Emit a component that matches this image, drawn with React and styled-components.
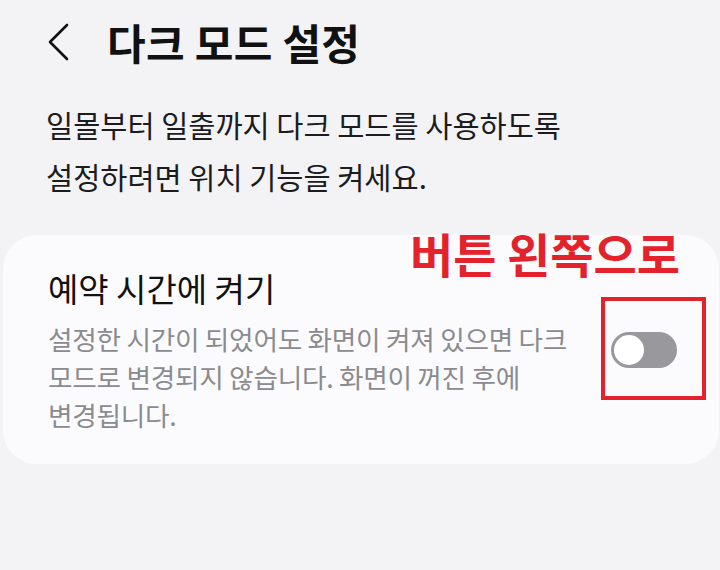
import React from "react";
import styled, { createGlobalStyle } from "styled-components";

const Global = createGlobalStyle`
  html, body { margin: 0; padding: 0; background: #f3f3f5; }
  body { font-family: "Noto Sans CJK KR", "Noto Sans", sans-serif; }
  * { box-sizing: border-box; }
`;

const Page = styled.div`
  width: 720px;
  height: 570px;
  background: #f3f3f5;
  overflow: hidden;
`;

const Header = styled.div`
  display: flex;
  align-items: center;
  height: 84px;
  padding-left: 48px;
  gap: 37px;
`;

const BackButton = styled.button`
  display: flex;
  align-items: center;
  justify-content: center;
  border: 0;
  background: none;
  padding: 0;
  width: 22px;
  height: 40px;
`;

const Title = styled.h1`
  margin: 0;
  font-size: 42px;
  font-weight: 700;
  color: #111;
  letter-spacing: 0.3px;
  line-height: 1;
`;

const Description = styled.p`
  margin: 14px 0 0;
  padding: 0 20px 0 46px;
  font-size: 29.5px;
  line-height: 52px;
  color: #1c1c1e;
  letter-spacing: 0;
  white-space: nowrap;
`;

const Card = styled.section`
  position: relative;
  margin: 33px 1px 0 3px;
  background: #fbfbfd;
  border-radius: 34px;
  padding: 31px 0 30px 45px;
  display: flex;
  align-items: center;
`;

const TextColumn = styled.div`
  flex: 1;
  min-width: 0;
  display: flex;
  flex-direction: column;
  gap: 10px;
`;

const ItemTitle = styled.div`
  font-size: 33px;
  line-height: 44px;
  color: #111;
  letter-spacing: 0;
`;

const ItemSub = styled.div`
  font-size: 26.7px;
  line-height: 38px;
  color: #8b8b8f;
  letter-spacing: -0.3px;
  white-space: nowrap;
`;

const SwitchArea = styled.div`
  width: 150px;
  flex: none;
  display: flex;
  justify-content: center;
  align-items: center;
`;

const Switch = styled.div`
  position: relative;
  width: 66px;
  height: 36px;
  border-radius: 18px;
  background: #98989d;
`;

const Knob = styled.div`
  position: absolute;
  top: 3px;
  left: 3px;
  width: 30px;
  height: 30px;
  border-radius: 50%;
  background: #fff;
`;

const Annotation = styled.div`
  position: absolute;
  top: -6px;
  right: 39px;
  font-size: 47px;
  font-weight: 700;
  color: #e3222b;
  letter-spacing: 0;
  line-height: 1;
`;

const HighlightBox = styled.div`
  position: absolute;
  left: 598px;
  top: 62px;
  width: 105px;
  height: 103px;
  border: 4px solid #e3222b;
`;

export default function App() {
  return (
    <>
      <Global />
      <Page>
        <Header>
          <BackButton aria-label="뒤로">
            <svg width="22" height="40" viewBox="0 0 22 40" fill="none">
              <path d="M19 3 L2 20 L19 37" stroke="#111" strokeWidth="2.6" strokeLinecap="round" strokeLinejoin="round" />
            </svg>
          </BackButton>
          <Title>다크 모드 설정</Title>
        </Header>
        <Description>
          일몰부터 일출까지 다크 모드를 사용하도록
          <br />
          설정하려면 위치 기능을 켜세요.
        </Description>
        <Card>
          <TextColumn>
            <ItemTitle>예약 시간에 켜기</ItemTitle>
            <ItemSub>
              설정한 시간이 되었어도 화면이 켜져 있으면 다크
              <br />
              모드로 변경되지 않습니다. 화면이 꺼진 후에
              <br />
              변경됩니다.
            </ItemSub>
          </TextColumn>
          <SwitchArea>
            <Switch>
              <Knob />
            </Switch>
          </SwitchArea>
          <Annotation>버튼 왼쪽으로</Annotation>
          <HighlightBox />
        </Card>
      </Page>
    </>
  );
}
